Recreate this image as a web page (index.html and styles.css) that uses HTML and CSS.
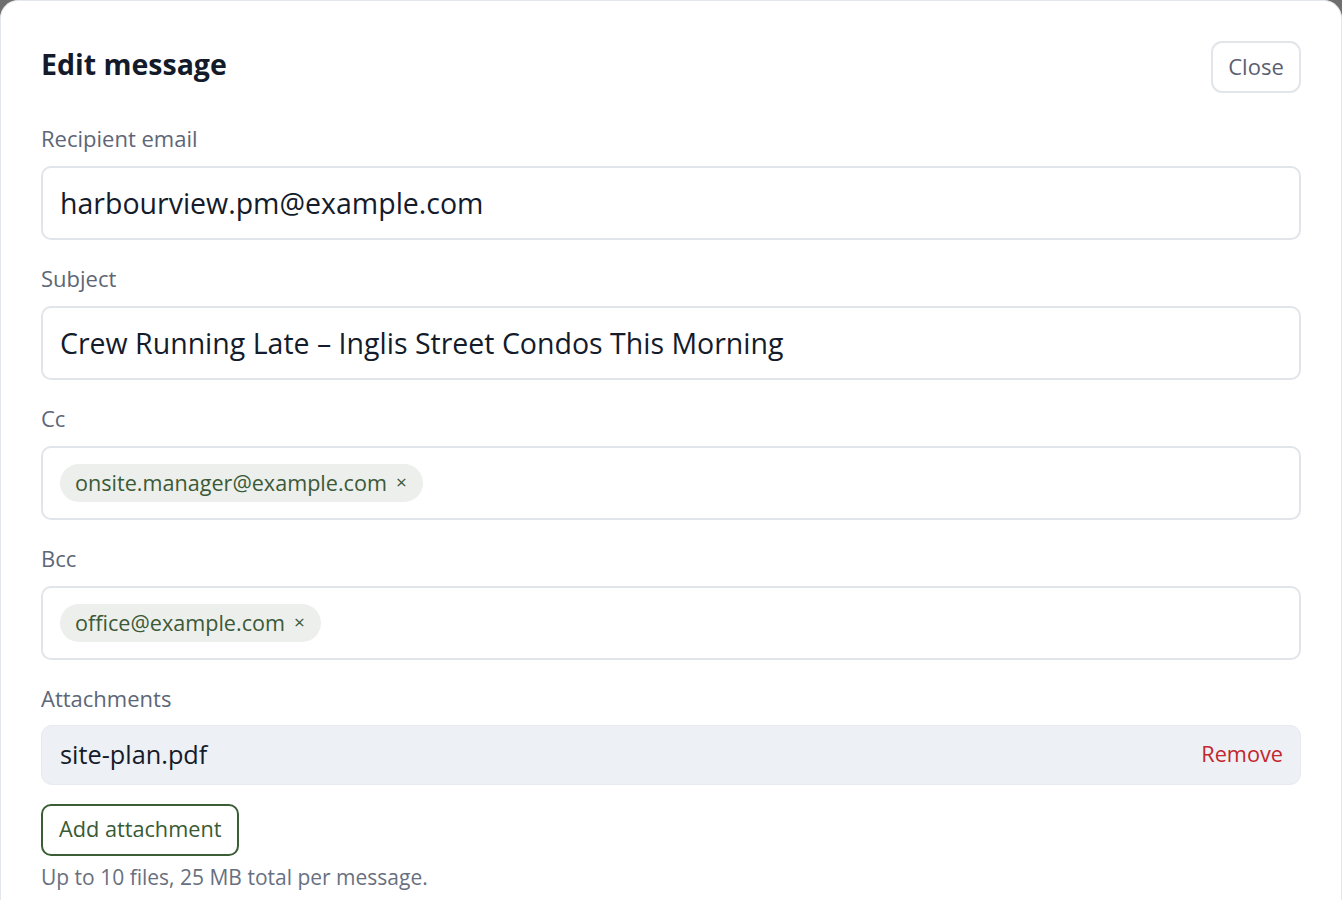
FILE: index.html
```html
<!DOCTYPE html>
<html lang="en">
<head>
<meta charset="utf-8">
<title>Edit message</title>
<link rel="stylesheet" href="styles.css">
</head>
<body>
<div class="modal">
  <div class="header">
    <h1 class="title">Edit message</h1>
    <button class="btn-close" type="button">Close</button>
  </div>

  <div class="field">
    <div class="label">Recipient email</div>
    <div class="input">harbourview.pm@example.com</div>
  </div>

  <div class="field">
    <div class="label">Subject</div>
    <div class="input">Crew Running Late – Inglis Street Condos This Morning</div>
  </div>

  <div class="field">
    <div class="label">Cc</div>
    <div class="input chips">
      <span class="chip"><span>onsite.manager@example.com</span><span class="chip-x">×</span></span>
    </div>
  </div>

  <div class="field">
    <div class="label">Bcc</div>
    <div class="input chips">
      <span class="chip"><span>office@example.com</span><span class="chip-x">×</span></span>
    </div>
  </div>

  <div class="field attachments">
    <div class="label label-attach">Attachments</div>
    <div class="attachment">
      <span class="file-name">site-plan.pdf</span>
      <span class="remove">Remove</span>
    </div>
    <button class="btn-add" type="button">Add attachment</button>
    <div class="help">Up to 10 files, 25 MB total per message.</div>
  </div>
</div>
</body>
</html>
```

FILE: styles.css
```css
html, body {
  margin: 0;
  padding: 0;
}
body {
  background: #6e6e6e;
  font-family: "Open Sans", "Noto Sans", sans-serif;
  color: #111827;
  height: 900px;
  overflow: hidden;
}
.modal {
  background: #ffffff;
  border: 1px solid #e3e6eb;
  border-radius: 18px;
  padding: 40px;
  box-sizing: border-box;
  width: 1342px;
  min-height: 960px;
}
.header {
  display: flex;
  justify-content: space-between;
  align-items: flex-start;
  margin-bottom: 32px;
}
.title {
  margin: 0;
  font-size: 28.5px;
  font-weight: 700;
  color: #131a2a;
  line-height: 46px;
  padding-bottom: 2px;
}
.btn-close {
  font-family: inherit;
  font-size: 22px;
  color: #5a6071;
  background: #fff;
  border: 2px solid #e2e5ea;
  border-radius: 11px;
  width: 90px;
  height: 52px;
  padding: 0 0 3px 0;
}
.field {
  margin-bottom: 25px;
}
.label {
  font-size: 22px;
  line-height: 26px;
  padding-bottom: 2px;
  color: #5d6677;
  margin-bottom: 13px;
}
.label-attach {
  margin-bottom: 12px;
}
.input {
  border: 2px solid #e1e4e9;
  border-radius: 10px;
  height: 74px;
  box-sizing: border-box;
  padding: 0 17px;
  display: flex;
  align-items: center;
  font-size: 28.5px;
  color: #141b2b;
}
.chips {
  gap: 8px;
}
.chip {
  background: #edefec;
  color: #3b5a37;
  border-radius: 19px;
  height: 38px;
  box-sizing: border-box;
  display: inline-flex;
  align-items: center;
  padding: 0 16px 2px 15px;
  font-size: 21.6px;
  gap: 9px;
}
.chip-x {
  font-size: 19px;
}
.attachment {
  background: #edf0f4;
  border: 1px solid #e6e9ee;
  border-radius: 11px;
  height: 60px;
  box-sizing: border-box;
  display: flex;
  justify-content: space-between;
  align-items: center;
  padding: 0 17px 3px 18px;
}
.file-name {
  font-size: 25.3px;
  color: #141b2b;
}
.remove {
  font-size: 21.7px;
  color: #c3262c;
}
.btn-add {
  margin-top: 19px;
  font-family: inherit;
  font-size: 21.7px;
  color: #385a34;
  background: #fff;
  border: 2px solid #3b5e37;
  border-radius: 10px;
  height: 52px;
  padding: 0 16px 4px;
}
.help {
  margin-top: 8px;
  font-size: 21px;
  line-height: 26px;
  padding-bottom: 2px;
  color: #687080;
}
```
